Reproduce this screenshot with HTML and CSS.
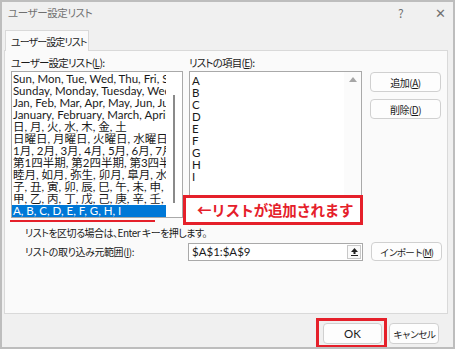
FILE: index.html
```html
<!DOCTYPE html>
<html lang="ja">
<head>
  <meta charset="UTF-8">
  <title>ユーザー設定リスト</title>
  <link rel="stylesheet" href="styles.css">
</head>
<body>
  <div class="window">
    <div class="titlebar">
      <span class="title">ユーザー設定リスト</span>
      <span class="help">?</span>
      <span class="close">✕</span>
    </div>
    <div class="tabs">
      <div class="tab">ユーザー設定リスト</div>
    </div>
    <div class="panel">
      <div class="lists">
        <div class="group left">
          <div class="label">ユーザー設定リスト(<u>L</u>):</div>
          <div class="listbox">
            <div class="items">
              <div class="item">Sun, Mon, Tue, Wed, Thu, Fri, Sat</div>
              <div class="item">Sunday, Monday, Tuesday, Wednesday</div>
              <div class="item">Jan, Feb, Mar, Apr, May, Jun, Jul, Aug</div>
              <div class="item">January, February, March, April, May</div>
              <div class="item">日, 月, 火, 水, 木, 金, 土</div>
              <div class="item">日曜日, 月曜日, 火曜日, 水曜日, 木曜日</div>
              <div class="item">1月, 2月, 3月, 4月, 5月, 6月, 7月, 8月</div>
              <div class="item">第1四半期, 第2四半期, 第3四半期, 第4四半期</div>
              <div class="item">睦月, 如月, 弥生, 卯月, 皐月, 水無月</div>
              <div class="item">子, 丑, 寅, 卯, 辰, 巳, 午, 未, 申, 酉</div>
              <div class="item">甲, 乙, 丙, 丁, 戊, 己, 庚, 辛, 壬, 癸</div>
              <div class="item selected">A, B, C, D, E, F, G, H, I</div>
            </div>
            <div class="vscroll"><div class="thumb"></div></div>
          </div>
        </div>
        <div class="group right">
          <div class="label">リストの項目(<u>E</u>):</div>
          <div class="listbox">
            <div class="items entries">
              <div class="item">A</div>
              <div class="item">B</div>
              <div class="item">C</div>
              <div class="item">D</div>
              <div class="item">E</div>
              <div class="item">F</div>
              <div class="item">G</div>
              <div class="item">H</div>
              <div class="item">I</div>
            </div>
            <div class="vscroll light"><span class="arrow"></span></div>
          </div>
        </div>
        <div class="side-buttons">
          <button class="btn">追加(<u>A</u>)</button>
          <button class="btn">削除(<u>D</u>)</button>
        </div>
        <div class="underline"></div>
        <div class="callout">←リストが追加されます</div>
      </div>
      <p class="hint">リストを区切る場合は、Enter キーを押します。</p>
      <div class="import-row">
        <div class="import-label">リストの取り込み元範囲(<u>I</u>):</div>
        <div class="range">
          <span class="range-value">$A$1:$A$9</span>
          <span class="pick">
            <svg width="9" height="9" viewBox="0 0 9 9"><path d="M4.5 1 L8 5 L5.5 5 L5.5 7 L3.5 7 L3.5 5 L1 5 Z" fill="#222"/><rect x="1" y="8" width="7" height="1" fill="#222"/></svg>
          </span>
        </div>
        <button class="btn import">インポート(<u>M</u>)</button>
      </div>
    </div>
    <div class="footer">
      <span class="ok-wrap"><button class="btn ok">OK</button></span>
      <button class="btn cancel">キャンセル</button>
    </div>
  </div>
</body>
</html>
```

FILE: styles.css
```css
* {
  box-sizing: border-box;
}
body {
  margin: 0;
  font-family: "Lato", "Noto Sans CJK JP", sans-serif;
  font-size: 12px;
  color: #1a1a1a;
  font-feature-settings: "palt";
}
.window {
  width: 455px;
  height: 349px;
  border: 2px solid #bdbdbd;
  background: #f0f0f0;
  overflow: hidden;
}
.titlebar {
  height: 20px;
  display: flex;
  align-items: center;
  padding-left: 6px;
  color: #707070;
  font-family: "Noto Sans CJK JP", sans-serif;
  font-size: 10.5px;
  letter-spacing: -0.4px;
}
.title {
  flex: 1;
}
.help {
  width: 37px;
  font-size: 12px;
}
.close {
  width: 18px;
  font-size: 13px;
}
.tabs {
  margin-top: 8px;
  padding-left: 3px;
  display: flex;
}
.tab {
  position: relative;
  z-index: 1;
  width: 84px;
  height: 21px;
  margin-bottom: -1px;
  padding: 3px 0 0 5px;
  background: #fafafa;
  border: 1px solid #d9d9d9;
  border-bottom: none;
  white-space: nowrap;
  font-family: "Noto Sans CJK JP", sans-serif;
  font-size: 10px;
  letter-spacing: -0.9px;
}
.panel {
  height: 264px;
  margin: 0 5px 0 2px;
  padding: 5px 6px 0;
  background: #fafafa;
  border: 1px solid #d9d9d9;
}
.lists {
  position: relative;
  display: flex;
  gap: 6px;
}
.group.left {
  width: 172px;
}
.group.right {
  width: 174px;
  margin-right: 2px;
}
.label {
  height: 14px;
  line-height: 14px;
  margin-bottom: 1px;
  white-space: nowrap;
  font-family: "Noto Sans CJK JP", sans-serif;
  font-size: 10.5px;
  letter-spacing: -0.8px;
}
.listbox {
  display: flex;
  height: 147px;
  background: #fff;
  border: 1px solid #a9a9a9;
  overflow: hidden;
}
.items {
  flex: 1;
  padding-top: 1px;
  overflow: hidden;
}
.item {
  height: 12px;
  line-height: 12px;
  padding-left: 1px;
  white-space: nowrap;
  overflow: hidden;
  font-size: 11.5px;
}
.item.selected {
  background: #0078d7;
  color: #fff;
}
.entries {
  padding-top: 3px;
}
.entries .item {
  padding-left: 2px;
}
.vscroll {
  width: 16px;
  display: flex;
  justify-content: center;
}
.thumb {
  width: 2px;
  height: 108px;
  margin-top: 23px;
  background: #8a8a8a;
}
.vscroll.light {
  width: 17px;
  background: #fbfbfb;
}
.arrow {
  width: 0;
  height: 0;
  margin-top: 5px;
  border-left: 4px solid transparent;
  border-right: 4px solid transparent;
  border-bottom: 5px solid #a6a6a6;
}
.side-buttons {
  display: flex;
  flex-direction: column;
  gap: 7px;
  padding-top: 16px;
}
.btn {
  flex-shrink: 0;
  width: 71px;
  height: 20px;
  padding: 0;
  background: #fdfdfd;
  border: 1px solid #d0d0d0;
  border-radius: 4px;
  white-space: nowrap;
  font-family: "Noto Sans CJK JP", sans-serif;
  font-size: 10px;
  letter-spacing: -0.5px;
  color: #1a1a1a;
}
.underline {
  position: absolute;
  left: -1px;
  top: 164px;
  width: 145px;
  height: 2px;
  background: #e5202a;
}
.callout {
  position: absolute;
  left: 172px;
  top: 139px;
  width: 180px;
  height: 30px;
  padding-left: 11px;
  line-height: 24px;
  background: #fff;
  border: 3px solid #e5202a;
  color: #e5202a;
  font-family: "Noto Sans CJK JP", sans-serif;
  font-size: 14.5px;
  font-weight: bold;
  font-feature-settings: normal;
  letter-spacing: -0.3px;
}
.hint {
  margin: 8px 0 0 14px;
  height: 14px;
  line-height: 14px;
  white-space: nowrap;
  font-family: "Noto Sans CJK JP", sans-serif;
  font-size: 10px;
  letter-spacing: -0.5px;
}
.import-row {
  display: flex;
  align-items: center;
  margin-top: 2px;
  padding-left: 14px;
}
.import-label {
  flex-shrink: 0;
  width: 163px;
  white-space: nowrap;
  font-family: "Noto Sans CJK JP", sans-serif;
  font-size: 10px;
  letter-spacing: -0.4px;
}
.range {
  flex-shrink: 0;
  display: flex;
  align-items: center;
  width: 175px;
  height: 18px;
  margin-right: 8px;
  background: #fff;
  border: 1px solid #a9a9a9;
}
.range-value {
  flex: 1;
  padding-left: 3px;
  font-size: 11.5px;
}
.pick {
  display: flex;
  align-items: center;
  justify-content: center;
  width: 14px;
  height: 14px;
  margin-right: 1px;
  border: 1px solid #c8c8c8;
  background: #fafafa;
}
.btn.import {
  height: 19px;
  font-size: 9.5px;
  letter-spacing: -1.1px;
}
.footer {
  display: flex;
  justify-content: flex-end;
  gap: 7px;
  padding: 9px 14px 0 0;
}
.ok-wrap {
  position: relative;
  display: flex;
}
.ok-wrap::after {
  content: "";
  position: absolute;
  top: -5px;
  left: -7px;
  right: -5px;
  bottom: -4px;
  border: 3px solid #e5202a;
}
.btn.ok {
  width: 59px;
  height: 21px;
  font-family: "Lato", sans-serif;
  font-size: 11.5px;
  letter-spacing: 0;
}
.btn.cancel {
  width: 50px;
  height: 21px;
  font-size: 9.5px;
  letter-spacing: -1.2px;
}
```
